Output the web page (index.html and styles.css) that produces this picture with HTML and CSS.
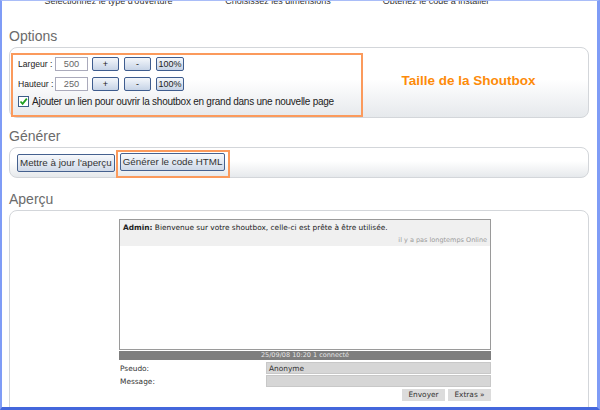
FILE: index.html
```html
<!DOCTYPE html>
<html lang="fr">
<head>
<meta charset="utf-8">
<title>Shoutbox</title>
<link rel="stylesheet" href="styles.css">
</head>
<body>
<div class="frame">
  <div class="steps">
    <span class="step s1">Sélectionnez le type d'ouverture</span>
    <span class="step s2">Choisissez les dimensions</span>
    <span class="step s3">Obtenez le code à installer</span>
  </div>

  <h2 class="title t-options">Options</h2>
  <div class="panel options">
    <div class="hl dims">
      <div class="row">
        <span class="lbl">Largeur :</span>
        <span class="num">500</span>
        <span class="btn">+</span>
        <span class="btn">-</span>
        <span class="btn">100%</span>
      </div>
      <div class="row">
        <span class="lbl">Hauteur :</span>
        <span class="num">250</span>
        <span class="btn">+</span>
        <span class="btn">-</span>
        <span class="btn">100%</span>
      </div>
      <label class="check">
        <span class="box"><svg width="9" height="9" viewBox="0 0 9 9"><path d="M1.5 4.5 L3.6 6.8 L7.8 1.6" fill="none" stroke="#21a121" stroke-width="1.8"/></svg></span>
        <span class="check-text">Ajouter un lien pour ouvrir la shoutbox en grand dans une nouvelle page</span>
      </label>
    </div>
    <div class="caption">Taille de la Shoutbox</div>
  </div>

  <h2 class="title t-gen">Générer</h2>
  <div class="panel gen">
    <span class="gbtn">Mettre à jour l'aperçu</span>
    <span class="hl hl-btn"><span class="gbtn">Générer le code HTML</span></span>
  </div>

  <h2 class="title t-ap">Aperçu</h2>
  <div class="panel apercu">
    <div class="shout">
      <div class="msgs">
        <div class="msg">
          <div class="msg-text"><b>Admin:</b> Bienvenue sur votre shoutbox, celle-ci est prête à être utilisée.</div>
          <div class="msg-meta">il y a pas longtemps Online</div>
        </div>
      </div>
      <div class="status">25/09/08 10:20 1 connecté</div>
      <div class="frow"><span class="flbl">Pseudo:</span><span class="finp">Anonyme</span></div>
      <div class="frow"><span class="flbl">Message:</span><span class="finp"></span></div>
      <div class="sbtns"><span class="sbtn">Envoyer</span><span class="sbtn">Extras »</span></div>
    </div>
  </div>
</div>
</body>
</html>
```

FILE: styles.css
```css
html, body { margin: 0; padding: 0; background: #fff; }
body { font-family: "Liberation Sans", Arial, sans-serif; color: #222; }

.frame {
  width: 600px;
  height: 410px;
  box-sizing: border-box;
  border-left: 2px solid #7f9cf6;
  border-top: 1px solid #a9bdf8;
  border-right: 3px solid #7f9cf6;
  border-bottom: 3px solid #4467dc;
  overflow: hidden;
  padding: 0 8px 0 7px;
}

.steps {
  display: grid;
  grid-template-columns: 199px 140px 176px;
  margin-top: -5px;
  font-size: 9px;
  color: #333;
  height: 12px;
}
.step { text-align: center; white-space: nowrap; }

.title {
  margin: 0;
  font-weight: normal;
  font-size: 14px;
  color: #6b6b6b;
  line-height: 16px;
}
.t-options { margin-top: 20px; }
.t-gen { margin-top: 10px; }
.t-ap { margin-top: 13px; }

.panel {
  border: 1px solid #d3d6da;
  border-radius: 8px;
  background: linear-gradient(#fff 45%, #e6e9ec);
  margin-top: 3px;
}

.options {
  display: flex;
  align-items: flex-start;
  padding: 5px 0 0 1px;
  box-sizing: border-box;
  height: 71px;
}
.hl { border: 2px solid #fb9a5c; }
.dims {
  width: 343px;
  height: 58px;
  padding: 2px 0 0 5px;
  box-sizing: content-box;
  font-size: 9.2px;
  color: #222;
}
.row { display: flex; align-items: center; height: 14px; margin-bottom: 6px; }
.lbl { width: 37px; flex-shrink: 0; white-space: nowrap; font-size: 8.6px; }
.num {
  width: 31px; height: 12px;
  border: 1px solid #aab;
  color: #666;
  text-align: center;
  line-height: 12px;
  margin-right: 4px;
  background: #fff;
  flex-shrink: 0;
}
.btn {
  width: 25px; height: 12px;
  border: 1px solid #3e5c8e;
  border-radius: 2px;
  background: linear-gradient(#f4f7fb, #c6d3e6);
  text-align: center;
  line-height: 12px;
  font-size: 9px;
  color: #222;
  margin-right: 5px;
  flex-shrink: 0;
}
.row .btn:last-child { width: 26px; }
.check {
  display: flex;
  align-items: center;
  gap: 3px;
  font-size: 10px;
  letter-spacing: -0.25px;
  color: #222;
  margin-top: -1px;
  white-space: nowrap;
}
.box {
  width: 9px; height: 9px;
  border: 1px solid #3c5f8a;
  background: #fff;
  display: flex;
  flex-shrink: 0;
}
.caption {
  flex: 1;
  align-self: center;
  text-align: center;
  color: #fd8b0a;
  font-weight: bold;
  font-size: 13.5px;
  margin-top: -9px;
  padding-right: 14px;
}

.gen {
  height: 31px;
  box-sizing: border-box;
  display: flex;
  align-items: center;
  padding: 0 0 0 7px;
  gap: 1px;
}
.gbtn {
  display: inline-block;
  height: 16px;
  line-height: 16px;
  padding: 0 2px;
  border: 1px solid #45618f;
  border-radius: 2px;
  background: linear-gradient(#f7f9fc, #cfd9e8);
  font-size: 9.8px;
  color: #333;
  white-space: nowrap;
}
.hl-btn { padding: 1px 3px 5px 2px; display: inline-flex; margin-top: 2px; }

.apercu {
  height: 220px;
  padding: 8px 0 0 109px;
  box-sizing: border-box;
  background: #fff;
}
.shout { width: 372px; font-family: "DejaVu Sans", Tahoma, sans-serif; font-size: 7px; color: #333; }
.msgs {
  height: 131px;
  border: 1px solid #9a9a9a;
  box-sizing: border-box;
  background: #fff;
}
.msg { background: #f0f0f0; padding: 3px 3px 1px 3px; height: 22px; }
.msg-text { font-size: 7.4px; color: #222; }
.msg-text b { font-weight: bold; }
.msg-meta { text-align: right; color: #9a9a9a; font-size: 6.5px; margin-top: 4px; }
.status {
  background: #7e7e7e;
  color: #e6e6e6;
  text-align: center;
  height: 9px;
  line-height: 9px;
  font-size: 6.5px;
  margin-top: 1px;
}
.frow { display: flex; align-items: center; margin-top: 2px; height: 12px; }
.flbl { width: 146px; padding-left: 1px; font-size: 7.4px; }
.finp {
  flex: 1;
  height: 12px;
  background: #d6d6d6;
  border: 1px solid #c8c8c8;
  box-sizing: border-box;
  line-height: 11px;
  padding-left: 2px;
  font-size: 7.4px;
}
.frow + .frow { margin-top: 1px; }
.sbtns { display: flex; justify-content: flex-end; gap: 3px; margin-top: 2px; }
.sbtn {
  width: 43px; height: 12px; line-height: 12px;
  background: #dcdcdc;
  text-align: center;
  font-size: 7.4px;
  color: #333;
}
```
